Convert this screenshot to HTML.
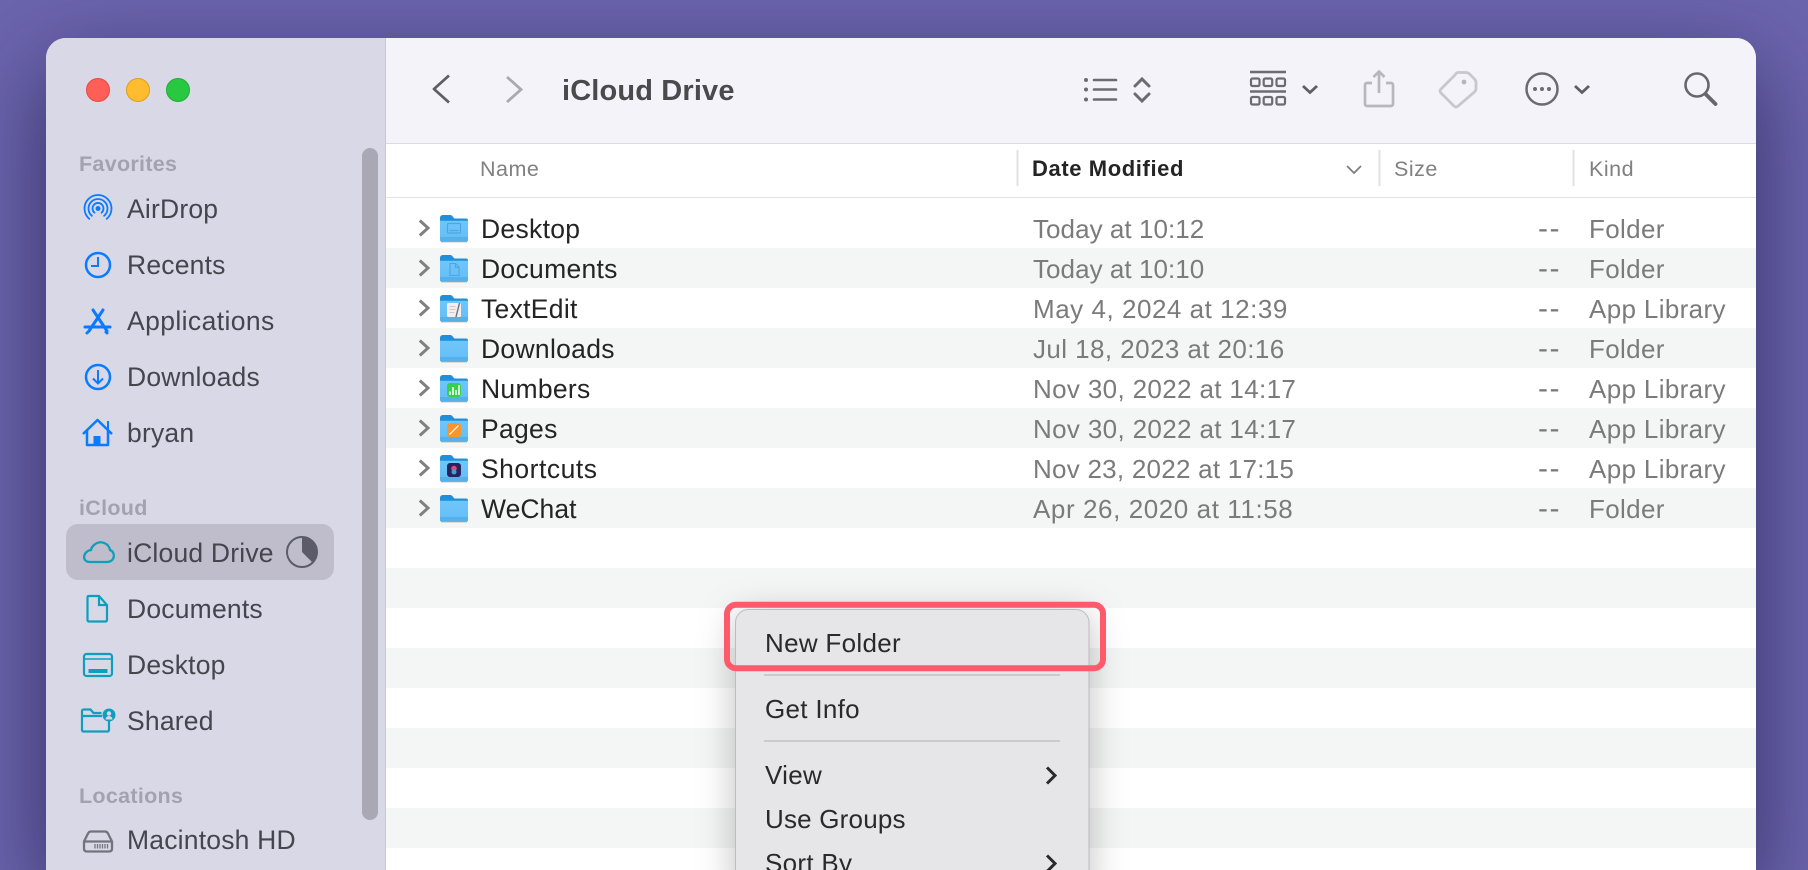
<!DOCTYPE html>
<html><head><meta charset="utf-8">
<style>
*{box-sizing:border-box;margin:0;padding:0}
html,body{width:1808px;height:870px;overflow:hidden}
body{position:relative;font-family:"Liberation Sans",sans-serif;background:#6b65ae}
.win{position:absolute;left:46px;top:38px;width:1710px;height:832px;border-radius:20px 20px 0 0;overflow:hidden;background:#fff;box-shadow:0 30px 90px rgba(30,25,70,.7)}
.a{position:absolute;white-space:nowrap}
.sb{position:absolute;left:0;top:0;width:1808px;height:870px}
.t{position:absolute;white-space:nowrap;line-height:40px;height:40px}
.side{left:127px;font-size:26.5px;color:#46454e;letter-spacing:.2px}
.h{left:79px;font-size:21.5px;font-weight:700;color:#a3a2b0;letter-spacing:.3px}
.n{left:481px;font-size:26.5px;color:#242424;letter-spacing:.3px}
.d{left:1033px;font-size:26px;color:#7b7b7b;letter-spacing:.3px}
.z{left:1538px;font-size:30px;color:#7b7b7b;letter-spacing:1.5px}
.k{left:1589px;font-size:26px;color:#7b7b7b;letter-spacing:.35px}
.c{left:480px;font-size:21.5px;color:#808080;letter-spacing:.5px}
.m{left:765px;font-size:26px;color:#2a2a2a;letter-spacing:.3px}
.stripe{position:absolute;left:386px;width:1370px;height:40px;background:#f4f5f5}
</style></head>
<body>
<div class="win">
  <div class="a" style="left:0;top:0;width:340px;height:832px;background:#d9d8e6;border-right:1px solid #c9c8d4"></div>
  <div class="a" style="left:340px;top:0;width:1370px;height:105.5px;background:#f4f3f9;border-bottom:1.5px solid #dcdbe0"></div>
  <div class="a" style="left:340px;top:105.5px;width:1370px;height:54px;background:#fff;border-bottom:1.5px solid #e3e3e3"></div>
  <div class="a" style="left:316px;top:110px;width:16px;height:672px;border-radius:8px;background:#aaa8b4"></div>
  <div class="a" style="left:20px;top:486px;width:268px;height:56px;border-radius:12px;background:#bfbdcb"></div>
</div>
<div class="stripe" style="top:248px"></div><div class="stripe" style="top:328px"></div><div class="stripe" style="top:408px"></div><div class="stripe" style="top:488px"></div><div class="stripe" style="top:568px"></div><div class="stripe" style="top:648px"></div><div class="stripe" style="top:728px"></div><div class="stripe" style="top:808px"></div>

<svg class="sb" viewBox="0 0 1808 870" fill="none">
<defs>
<linearGradient id="fb" x1="0" y1="0" x2="0" y2="1"><stop offset="0" stop-color="#6fc6f9"/><stop offset="1" stop-color="#63bdf5"/></linearGradient>
<g id="folder">
<path d="M441 241.800h26" stroke="#8a8a8a" stroke-width="1.400" opacity=".45"/>
<path d="M440 218q0-3 3-3h7q2 0 3 2l1.500 1.500h11.500q2 0 2 2v6h-28z" fill="#1f8fdb"/>
<path d="M440 220.700h28v19q0 2-2 2h-24q-2 0-2-2z" fill="url(#fb)"/>
<path d="M440 237h28v2.700q0 2-2 2h-24q-2 0-2-2z" fill="#52abe6" opacity=".75"/>
</g>
<path id="ch" d="M419.800 220.500l8.200 7.500-8.200 7.500" stroke="#808080" stroke-width="3"/>
</defs>
<circle cx="98" cy="90" r="11.500" fill="#ff5f57" stroke="#e5493f"/>
<circle cx="138" cy="90" r="11.500" fill="#febc2e" stroke="#e09e1a"/>
<circle cx="178" cy="90" r="11.500" fill="#28c840" stroke="#20ad35"/>

<!-- AirDrop -->
<circle cx="98" cy="208.500" r="2.500" fill="#0a7aff"/>
<g stroke="#0a7aff" stroke-width="1.800" stroke-linecap="round">
<path d="M94.500 212.700a5.500 5.500 0 1 1 7 0"/>
<path d="M91.900 215.800a9.500 9.500 0 1 1 12.200 0"/>
<path d="M89.300 218.800a13.500 13.500 0 1 1 17.400 0"/>
</g>
<!-- Recents -->
<g stroke="#0a7aff" stroke-width="2.500"><circle cx="98" cy="265" r="12"/><path d="M98 257v9h-7" stroke-width="2"/></g>
<!-- Apps -->
<g stroke="#0a7aff" stroke-width="3" stroke-linecap="round"><path d="M93 310l14 21"/><path d="M103 310l-14 21"/><path d="M85 327h25"/><path d="M88 332l-1 1M106 332l1 1"/></g>
<!-- Downloads -->
<g stroke="#0a7aff" stroke-width="2.500"><circle cx="98" cy="377" r="12"/><path d="M98 370v13M93 378.500l5 5 5-5" stroke-width="2"/></g>
<!-- Home -->
<g stroke="#0a7aff" stroke-width="2.500" stroke-linejoin="round"><path d="M83 434l14.500-14 14.500 14"/><path d="M87 430.500v14.500h21v-14.500"/><path d="M108 421v9" stroke-width="2"/></g><rect x="93.500" y="436" width="7" height="9" fill="#0a7aff"/>
<!-- cloud -->
<path d="M90 562h17c8 0 9-10 3-12-1-6-9-11-16-5-2 2-3 3-3 5-8 1-10 12-1 12z" stroke="#0e9fbd" stroke-width="2.300"/>
<!-- pie -->
<circle cx="302" cy="552" r="15" stroke="#5c5b69" stroke-width="2"/><path d="M302 552v-15a15 15 0 0 1 10.600 25.600z" fill="#5c5b69"/>
<!-- doc -->
<path d="M89 596h10l8 9v15a1.500 1.500 0 0 1-1.500 1.500H89a1.500 1.500 0 0 1-1.500-1.500v-23A1.500 1.500 0 0 1 89 596zM99 596v9h8" stroke="#0e9fbd" stroke-width="2.200"/>
<!-- desktop -->
<rect x="84" y="654" width="28" height="22" rx="2.500" stroke="#0e9fbd" stroke-width="2.200"/><path d="M84 659h28" stroke="#0e9fbd" stroke-width="1.500"/><rect x="88.500" y="669" width="19" height="4" fill="#0e9fbd"/>
<!-- shared -->
<path d="M82 711a1.500 1.500 0 0 1 1.500-1.500h7l3 3.500h8M82 711v19a1.500 1.500 0 0 0 1.500 1.500h24a1.500 1.500 0 0 0 1.500-1.500v-9M82 716h20" stroke="#0e9fbd" stroke-width="2.200"/>
<circle cx="109" cy="715" r="6.500" fill="#0e9fbd"/><circle cx="109" cy="713.500" r="2.200" fill="#d9d8e6"/><path d="M105.500 719.500a3.500 3.500 0 0 1 7 0z" fill="#d9d8e6"/>
<!-- HD -->
<path d="M91 831.500h14q2 0 3 2l4 8v7q0 3-3 3H87q-3 0-3-3v-7l4-8q1-2 3-2zM84.500 841.500h27" stroke="#74737c" stroke-width="2.300"/><path d="M95 844v4.500M97.500 844v4.500M100 844v4.500M102.500 844v4.500M105 844v4.500M107.500 844v4.500" stroke="#74737c" stroke-width="1.300"/>

<!-- toolbar -->
<path d="M449 75.500l-15 13.500 15 13.500" stroke="#5f5f63" stroke-width="2.800" stroke-linejoin="round"/>
<path d="M507 77l14 12.500-14 12.500" stroke="#aaaaae" stroke-width="2.800"/>
<g stroke="#6c6b72" stroke-width="2.600" stroke-linecap="round"><path d="M1094 80h22M1094 89.500h22M1094 99.500h22"/><path stroke-width="3" d="M1135 86l7-7 7 7M1135 94l7 7 7-7"/></g>
<g fill="#6c6b72"><circle cx="1086" cy="80" r="2"/><circle cx="1086" cy="89.500" r="2"/><circle cx="1086" cy="99.500" r="2"/></g>
<g stroke="#6c6b72"><path d="M1250 72h36M1250 91.500h36" stroke-width="2.400"/>
<g stroke-width="2.200"><rect x="1251" y="78.500" width="8.500" height="7.500" rx="1.500"/><rect x="1263.700" y="78.500" width="8.500" height="7.500" rx="1.500"/><rect x="1276.500" y="78.500" width="8.500" height="7.500" rx="1.500"/><rect x="1251" y="97" width="8.500" height="7.500" rx="1.500"/><rect x="1263.700" y="97" width="8.500" height="7.500" rx="1.500"/><rect x="1276.500" y="97" width="8.500" height="7.500" rx="1.500"/></g></g>
<path d="M1303 86l7 6.500 7-6.500" stroke="#5f5f63" stroke-width="2.800"/>
<g stroke="#b8b7bc" stroke-width="2.700"><path d="M1372 83h-5a2 2 0 0 0-2 2v19a2 2 0 0 0 2 2h24a2 2 0 0 0 2-2V85a2 2 0 0 0-2-2h-5"/><path d="M1379 93V71.500M1373.500 77l5.500-5.500 5.500 5.500"/></g>
<path d="M1458 72.500h8q2 0 3.500 1.500l5 5q1.500 1.500 1.500 3.500v6q0 2-1.500 3.500L1458 106q-2 2-4 0l-13-13q-2-2 0-4l14-14q1.500-2.500 3-2.500z" stroke="#c8c7cc" stroke-width="2.800"/><circle cx="1464" cy="82" r="2.400" fill="#b6b5ba"/>
<circle cx="1542" cy="89" r="15.500" stroke="#6c6b72" stroke-width="2.500"/><g fill="#6c6b72"><circle cx="1535" cy="89" r="2"/><circle cx="1542" cy="89" r="2"/><circle cx="1549" cy="89" r="2"/></g>
<path d="M1575 86l7 6.500 7-6.500" stroke="#5f5f63" stroke-width="2.800"/>
<circle cx="1697" cy="85" r="11.500" stroke="#67666d" stroke-width="2.600"/><path d="M1705.500 94l10 10" stroke="#67666d" stroke-width="3.800" stroke-linecap="round"/>

<!-- header -->
<path d="M1017.500 150v36M1379.500 150v36M1573.500 150v36" stroke="#e2e2e2" stroke-width="2"/>
<path d="M1347 166l7 7 7-7" stroke="#7d7d7d" stroke-width="1.700"/>

<!-- rows -->
<use href="#ch"/><use href="#ch" y="40"/><use href="#ch" y="80"/><use href="#ch" y="120"/><use href="#ch" y="160"/><use href="#ch" y="200"/><use href="#ch" y="240"/><use href="#ch" y="280"/>
<use href="#folder"/><use href="#folder" y="40"/><use href="#folder" y="80"/><use href="#folder" y="120"/><use href="#folder" y="160"/><use href="#folder" y="200"/><use href="#folder" y="240"/><use href="#folder" y="280"/>
<rect x="447.500" y="223.500" width="13" height="9.500" rx="1" stroke="#4fa6e2" stroke-width="1.200"/><path d="M449.500 230.500h9" stroke="#4fa6e2" stroke-width="1.200"/>
<path d="M450 263.500h5.500l3.500 3.500v8.500h-9zM455.500 263.500v4h3.500" stroke="#4fa6e2" stroke-width="1.100"/>
<rect x="447" y="303" width="14" height="14" rx="1.500" fill="#f3eff0"/><path d="M449.500 306.500h6M449.500 309.500h6M449.500 312.500h5" stroke="#d5c6cb"/><path d="M459.500 303l-3.500 14" stroke="#77767a" stroke-width="1.500"/>
<rect x="447" y="383" width="14" height="14" rx="3" fill="#34d14a"/><path d="M450 395v-3.500M453 395v-8M456 395v-5M459 395v-10" stroke="#e6fae8" stroke-width="1.800"/>
<rect x="447" y="423" width="14" height="14" rx="3" fill="#f9952e"/><path d="M449.500 434.500l9-9" stroke="#fff" stroke-width="1.200"/>
<rect x="447" y="463" width="14" height="14" rx="3" fill="#23265e"/><circle cx="454" cy="468.500" r="2.800" fill="#e8427c"/><circle cx="454" cy="472" r="2.500" fill="#3ea0dc"/>

<!-- menu -->
<rect x="735.500" y="609.500" width="353.500" height="290" rx="13" fill="#e6e5e8" stroke="#bdbcc0" style="filter:drop-shadow(0 6px 18px rgba(0,0,0,.25))"/>
<path d="M764 675h296M764 741h296" stroke="#cbcacf" stroke-width="2"/>
<path d="M1047 767.500l8 8-8 8M1047 855.500l8 8-8 8" stroke="#2a2a2a" stroke-width="3"/>
<rect x="727" y="604.700" width="376" height="63.500" rx="9" stroke="#fe5a6c" stroke-width="6"/>
</svg>

<div class="t" style="left:562px;top:71px;font-size:29px;font-weight:700;color:#4a4a4d;letter-spacing:.15px">iCloud Drive</div>

<div class="t h" style="top:144px">Favorites</div>
<div class="t side" style="top:189px">AirDrop</div>
<div class="t side" style="top:245px">Recents</div>
<div class="t side" style="top:301px;letter-spacing:.4px">Applications</div>
<div class="t side" style="top:357px">Downloads</div>
<div class="t side" style="top:413px">bryan</div>
<div class="t h" style="top:488px">iCloud</div>
<div class="t side" style="top:533px">iCloud Drive</div>
<div class="t side" style="top:589px">Documents</div>
<div class="t side" style="top:645px">Desktop</div>
<div class="t side" style="top:701px">Shared</div>
<div class="t h" style="top:776px">Locations</div>
<div class="t side" style="top:820px">Macintosh HD</div>

<div class="t c" style="top:149px">Name</div>
<div class="t c" style="left:1032px;top:149px;font-weight:700;color:#242424;font-size:22px;letter-spacing:.6px">Date Modified</div>
<div class="t c" style="left:1394px;top:149px">Size</div>
<div class="t c" style="left:1589px;top:149px">Kind</div>

<div class="t n" style="top:209px">Desktop</div><div class="t d" style="top:209px;letter-spacing:.05px">Today at 10:12</div><div class="t z" style="top:209px">--</div><div class="t k" style="top:209px">Folder</div>
<div class="t n" style="top:249px">Documents</div><div class="t d" style="top:249px;letter-spacing:.05px">Today at 10:10</div><div class="t z" style="top:249px">--</div><div class="t k" style="top:249px">Folder</div>
<div class="t n" style="top:289px">TextEdit</div><div class="t d" style="top:289px;letter-spacing:.53px">May 4, 2024 at 12:39</div><div class="t z" style="top:289px">--</div><div class="t k" style="top:289px">App Library</div>
<div class="t n" style="top:329px">Downloads</div><div class="t d" style="top:329px;letter-spacing:.42px">Jul 18, 2023 at 20:16</div><div class="t z" style="top:329px">--</div><div class="t k" style="top:329px">Folder</div>
<div class="t n" style="top:369px">Numbers</div><div class="t d" style="top:369px;letter-spacing:.35px">Nov 30, 2022 at 14:17</div><div class="t z" style="top:369px">--</div><div class="t k" style="top:369px">App Library</div>
<div class="t n" style="top:409px">Pages</div><div class="t d" style="top:409px;letter-spacing:.35px">Nov 30, 2022 at 14:17</div><div class="t z" style="top:409px">--</div><div class="t k" style="top:409px">App Library</div>
<div class="t n" style="top:449px;letter-spacing:.5px">Shortcuts</div><div class="t d" style="top:449px;letter-spacing:.25px">Nov 23, 2022 at 17:15</div><div class="t z" style="top:449px">--</div><div class="t k" style="top:449px">App Library</div>
<div class="t n" style="top:489px;letter-spacing:.05px">WeChat</div><div class="t d" style="top:489px;letter-spacing:.58px">Apr 26, 2020 at 11:58</div><div class="t z" style="top:489px">--</div><div class="t k" style="top:489px">Folder</div>

<div class="t m" style="top:623px">New Folder</div>
<div class="t m" style="top:689px">Get Info</div>
<div class="t m" style="top:755px">View</div>
<div class="t m" style="top:799px;letter-spacing:.2px">Use Groups</div>
<div class="t m" style="top:843px;height:27px;overflow:hidden">Sort By</div>
</body></html>
